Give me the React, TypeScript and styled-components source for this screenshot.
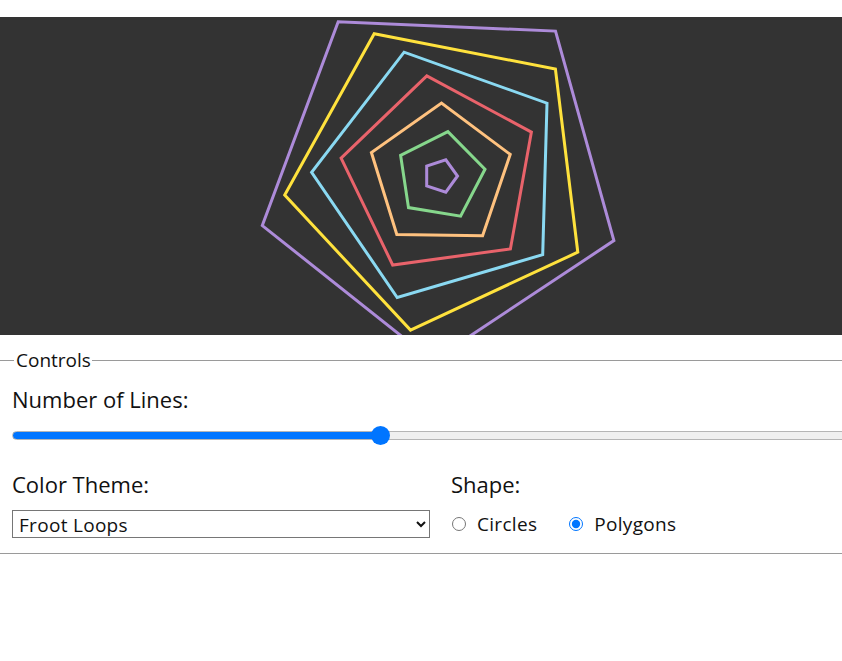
import React, { useState } from "react";
import styled, { createGlobalStyle } from "styled-components";

const GlobalStyle = createGlobalStyle`
  body {
    margin: 0;
    overflow: hidden;
    background: #fff;
    font-family: "Open Sans", "Noto Sans", sans-serif;
    color: #111;
  }
`;

const themes: Record<string, string[]> = {
  "Froot Loops": ["#ad8bd9", "#86d78c", "#ffc27f", "#e9636b", "#8ad9f2", "#ffe23d"],
  Ocean: ["#0b3c5d", "#328cc1", "#1fb5d1", "#a2d5f2", "#07689f", "#40a8c4"],
  Sunset: ["#ff5e5b", "#ff9f1c", "#ffd166", "#ef476f", "#f78c6b", "#c44569"],
};

const Page = styled.div`
  width: 880px;
  padding-top: 17px;
`;

const Canvas = styled.svg`
  display: block;
  width: 880px;
  height: 318px;
  background: #333333;
`;

const Fieldset = styled.fieldset`
  margin: 14px 0 0;
  padding: 16px 12px 15px;
  border: none;
  border-top: 1px solid #9a9a9a;
  border-bottom: 1px solid #9a9a9a;
`;

const Legend = styled.legend`
  margin-left: 2px;
  padding: 0 1px 0 2px;
  font-size: 19px;
  line-height: 22px;
`;

const Label = styled.div`
  font-size: 22px;
  line-height: 24px;
  margin-bottom: 14px;
`;

const Slider = styled.input<{ $pct: number }>`
  -webkit-appearance: none;
  appearance: none;
  display: block;
  width: 100%;
  height: 20px;
  margin: 0 0 27px;
  background: transparent;

  &::-webkit-slider-runnable-track {
    height: 9px;
    border-radius: 5px;
    box-sizing: border-box;
    border: 1px solid #b5b5b5;
    background: linear-gradient(
      to right,
      #0075ff 0%,
      #0075ff ${({ $pct }) => $pct}%,
      #efefef ${({ $pct }) => $pct}%,
      #efefef 100%
    );
  }

  &::-webkit-slider-thumb {
    -webkit-appearance: none;
    width: 19px;
    height: 19px;
    margin-top: -6px;
    border-radius: 50%;
    background: #0075ff;
    border: none;
  }
`;

const Row = styled.div`
  display: grid;
  grid-template-columns: 418px 1fr;
  column-gap: 21px;
`;

const Column = styled.div`
  display: flex;
  flex-direction: column;
`;

const Select = styled.select`
  height: 28px;
  width: 418px;
  font-family: "Open Sans", "Noto Sans", sans-serif;
  font-size: 19px;
  letter-spacing: 0.3px;
  padding: 0 2px;
  border: 1px solid #767676;
  border-radius: 0;
  background: #fff;
  color: #111;
`;

const Radios = styled.div`
  display: flex;
  align-items: center;
  height: 28px;
  gap: 31px;
`;

const RadioLabel = styled.label`
  display: flex;
  align-items: center;
  gap: 11px;
  font-size: 19px;
  letter-spacing: 0.3px;

  input {
    width: 14px;
    height: 14px;
    margin: 0 0 0 1px;
    accent-color: #0075ff;
  }
`;

function polygonPoints(cx: number, cy: number, r: number, rot: number, sides: number) {
  const pts: string[] = [];
  for (let k = 0; k < sides; k++) {
    const a = rot + (k * 2 * Math.PI) / sides;
    pts.push(`${(cx + r * Math.cos(a)).toFixed(1)},${(cy + r * Math.sin(a)).toFixed(1)}`);
  }
  return pts.join(" ");
}

export default function App() {
  const [lines, setLines] = useState(7);
  const [theme, setTheme] = useState("Froot Loops");
  const [shape, setShape] = useState<"circles" | "polygons">("polygons");

  const colors = themes[theme];
  const cx = 440.5;
  const cy = 159;
  const min = 1;
  const max = 15;
  const pct = ((lines - min) / (max - min)) * 100;

  return (
    <Page>
      <GlobalStyle />
      <Canvas viewBox="0 0 880 318">
        {Array.from({ length: lines }, (_, i) => {
          const r = 17 + 28 * i;
          const color = colors[i % colors.length];
          return shape === "polygons" ? (
            <polygon
              key={i}
              points={polygonPoints(cx, cy, r, -0.15 * i, 5)}
              fill="none"
              stroke={color}
              strokeWidth={3}
            />
          ) : (
            <circle key={i} cx={cx} cy={cy} r={r} fill="none" stroke={color} strokeWidth={3} />
          );
        })}
      </Canvas>
      <Fieldset>
        <Legend>Controls</Legend>
        <Label>Number of Lines:</Label>
        <Slider
          type="range"
          min={min}
          max={max}
          value={lines}
          $pct={pct}
          onChange={(e) => setLines(Number(e.target.value))}
        />
        <Row>
          <Column>
            <Label>Color Theme:</Label>
            <Select value={theme} onChange={(e) => setTheme(e.target.value)}>
              {Object.keys(themes).map((t) => (
                <option key={t}>{t}</option>
              ))}
            </Select>
          </Column>
          <Column>
            <Label>Shape:</Label>
            <Radios>
              <RadioLabel>
                <input
                  type="radio"
                  name="shape"
                  checked={shape === "circles"}
                  onChange={() => setShape("circles")}
                />
                Circles
              </RadioLabel>
              <RadioLabel>
                <input
                  type="radio"
                  name="shape"
                  checked={shape === "polygons"}
                  onChange={() => setShape("polygons")}
                />
                Polygons
              </RadioLabel>
            </Radios>
          </Column>
        </Row>
      </Fieldset>
    </Page>
  );
}
